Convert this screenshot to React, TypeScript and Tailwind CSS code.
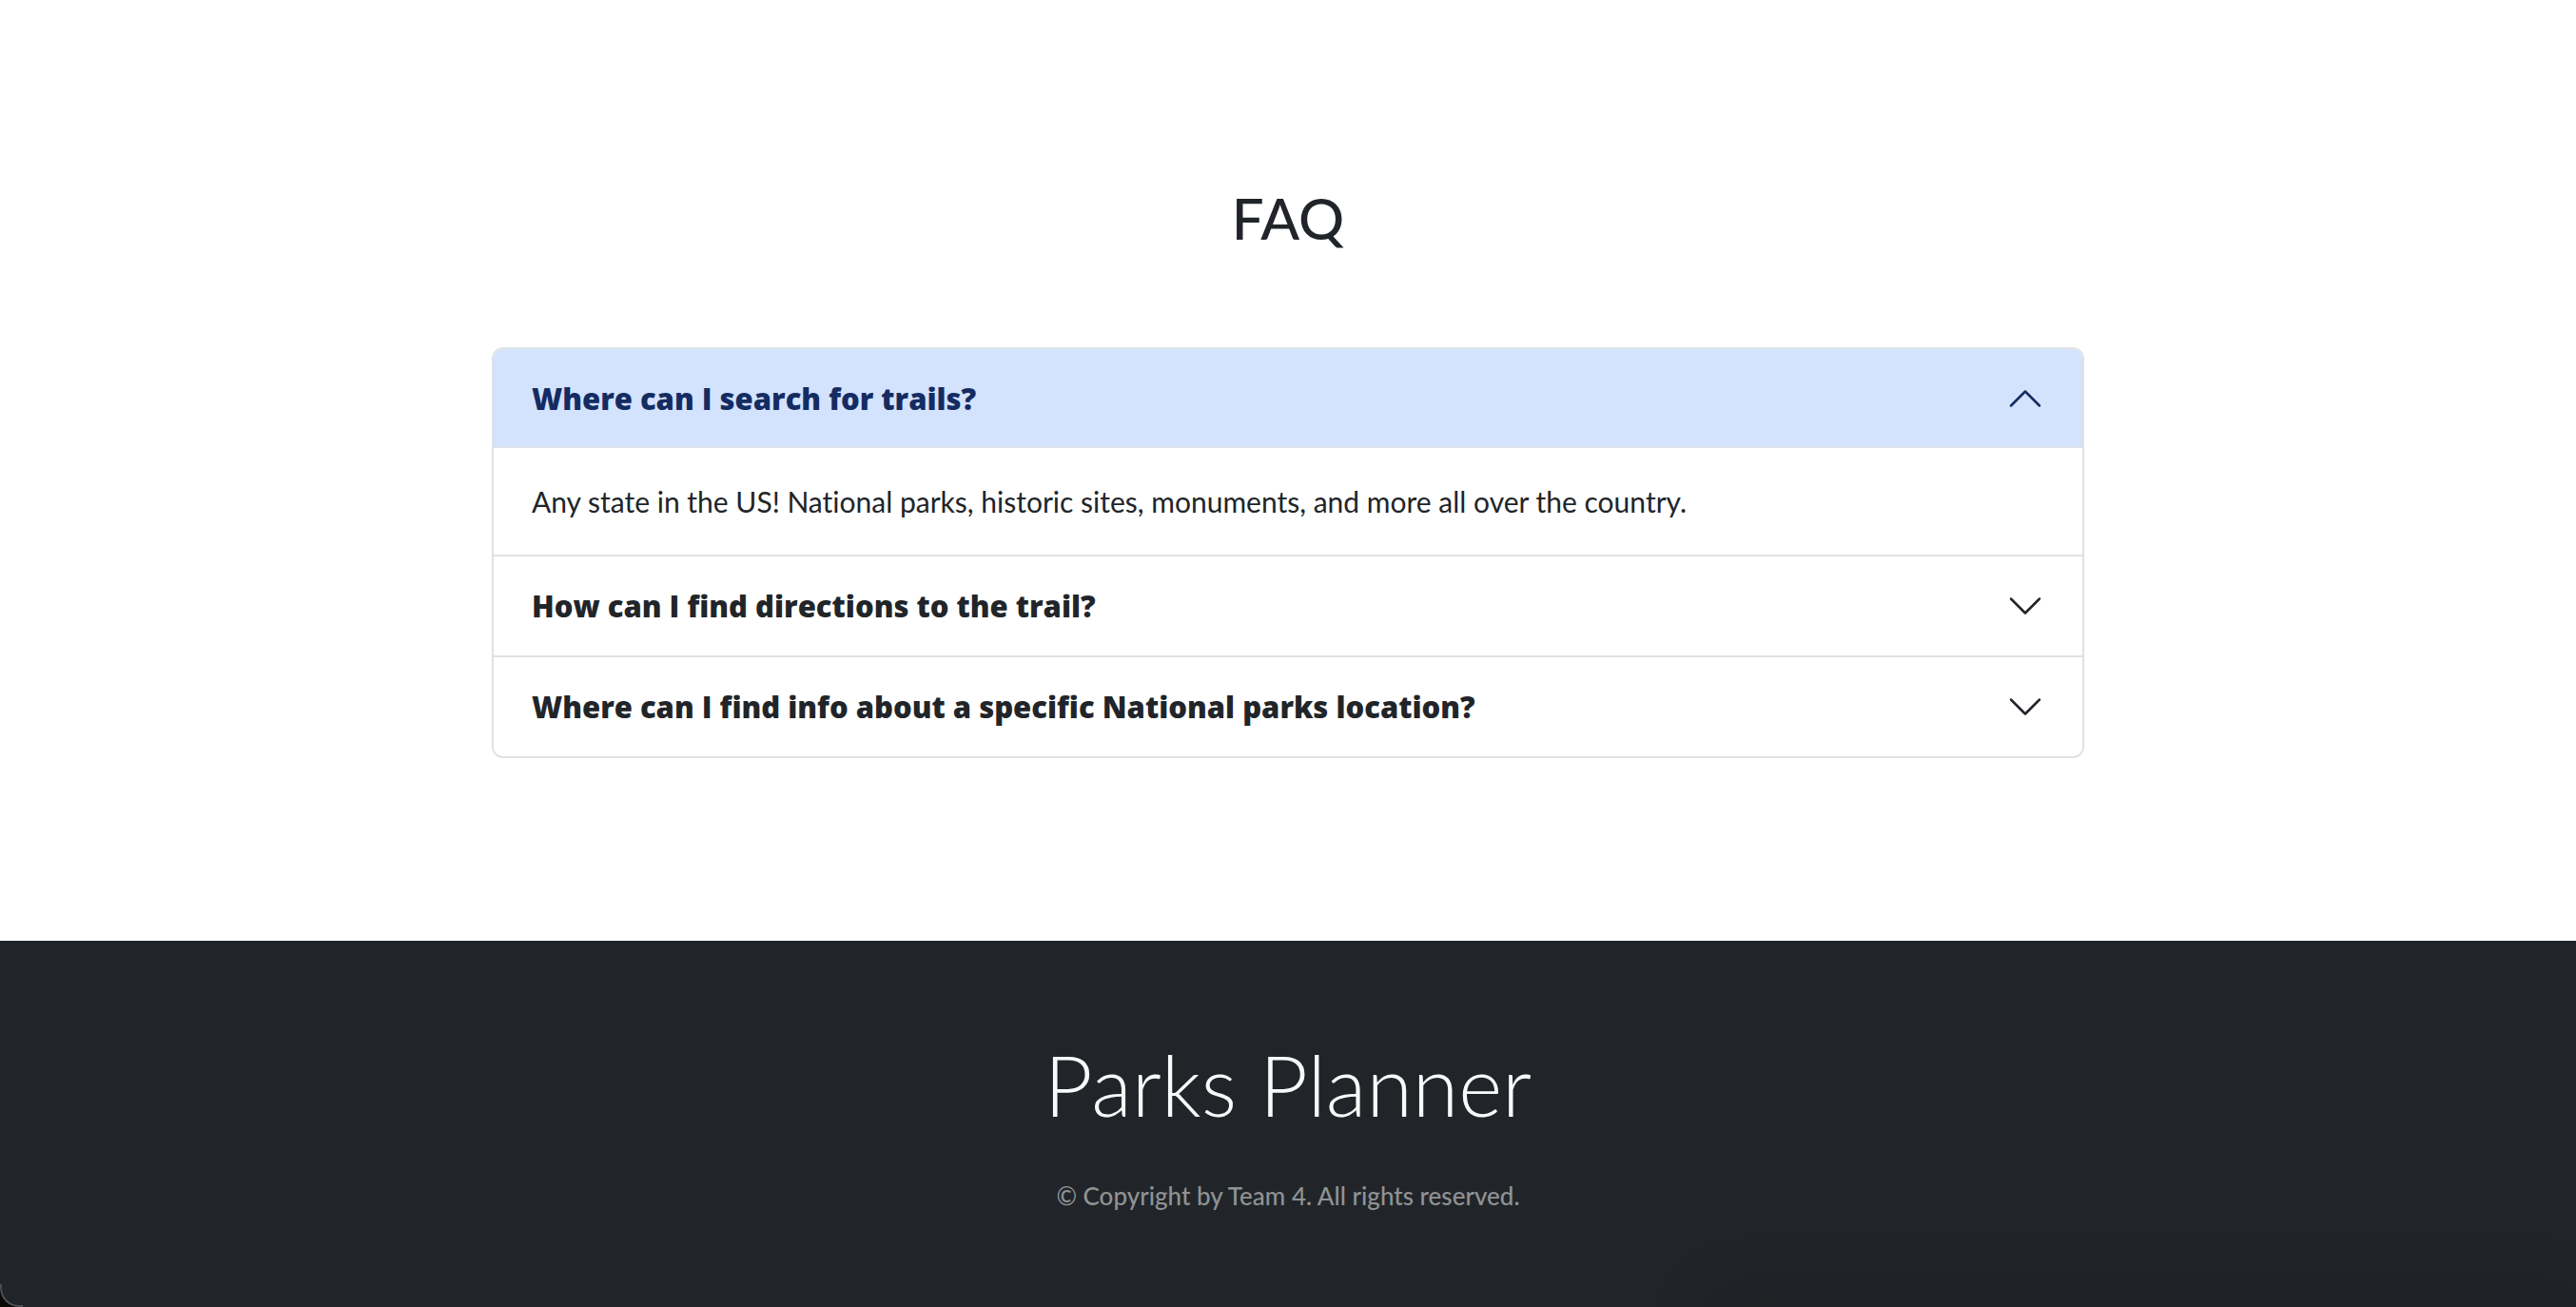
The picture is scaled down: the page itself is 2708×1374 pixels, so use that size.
import { useState } from "react";

const items = [
  {
    id: "trails",
    question: "Where can I search for trails?",
    answer:
      "Any state in the US! National parks, historic sites, monuments, and more all over the country.",
  },
  {
    id: "directions",
    question: "How can I find directions to the trail?",
    answer: "Open a park's page and follow the directions link.",
  },
  {
    id: "info",
    question: "Where can I find info about a specific National parks location?",
    answer: "Select a park to see its details.",
  },
];

function Chevron({ open }: { open: boolean }) {
  return (
    <svg
      viewBox="0 0 16 16"
      fill="none"
      stroke="currentColor"
      strokeLinecap="round"
      strokeLinejoin="round"
      aria-hidden="true"
      className={open ? "size-10 shrink-0 rotate-180" : "size-10 shrink-0"}
    >
      <path d="m2 5 6 6 6-6" />
    </svg>
  );
}

function Faq() {
  const [openId, setOpenId] = useState<string | null>("trails");

  return (
    <section className="flex flex-col items-center bg-white px-10 py-48">
      <h2 className="text-[60px] leading-[75px] font-medium">FAQ</h2>
      <div className="mt-[98px] w-full max-w-[1674px] divide-y-2 divide-[#dee2e6] overflow-hidden rounded-xl border-2 border-[#dee2e6]">
        {items.map((item) => {
          const open = item.id === openId;
          return (
            <div key={item.id}>
              <h3>
                <button
                  type="button"
                  id={`${item.id}-button`}
                  aria-expanded={open}
                  aria-controls={`${item.id}-panel`}
                  onClick={() => setOpenId(open ? null : item.id)}
                  className={
                    open
                      ? "flex w-full items-center justify-between gap-6 bg-[#d3e2fd] px-10 py-8 text-left font-['Open_Sans',sans-serif] text-[31px] leading-10 font-extrabold text-[#142c62] shadow-[inset_0_-2px_0_#dee2e6]"
                      : "flex w-full items-center justify-between gap-6 bg-white px-10 py-8 text-left font-['Open_Sans',sans-serif] text-[31px] leading-10 font-extrabold"
                  }
                >
                  {item.question}
                  <Chevron open={open} />
                </button>
              </h3>
              {open && (
                <div
                  id={`${item.id}-panel`}
                  role="region"
                  aria-labelledby={`${item.id}-button`}
                  className="px-10 py-8 text-[30px] leading-[48px]"
                >
                  {item.answer}
                </div>
              )}
            </div>
          );
        })}
      </div>
    </section>
  );
}

export default function App() {
  return (
    <div className="flex min-h-screen flex-col bg-[#0b0a05] font-['Lato',sans-serif] text-[#212529] [font-variant-ligatures:none]">
      <Faq />
      <footer className="relative flex grow flex-col items-center overflow-hidden rounded-bl-[20px] bg-[#212529] px-10 pt-24 pb-16 text-center">
        <p className="text-[88px] leading-[110px] font-light text-[#f8f9fa]">Parks Planner</p>
        <p className="mt-10 text-[26px] leading-[44px] font-medium text-[#909294]">
          © Copyright by Team 4. All rights reserved.
        </p>
        <span className="absolute bottom-0 left-0 size-6 rounded-bl-[20px] border-b-2 border-l-2 border-white/20" />
        <span className="absolute top-full right-0 left-2/3 h-10 shadow-[0_0_72px_rgba(0,0,0,0.25)]" />
      </footer>
    </div>
  );
}
